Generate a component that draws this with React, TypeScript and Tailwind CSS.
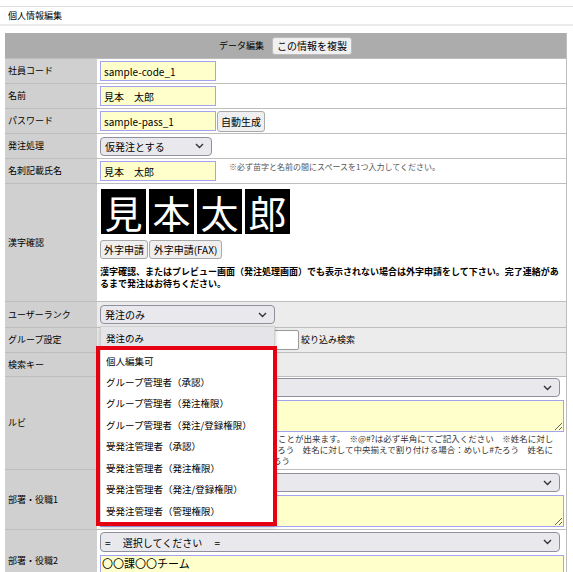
import React from "react";

const Chevron = () => (
  <svg width="9" height="6" viewBox="0 0 9 6" className="shrink-0">
    <path d="M1 1l3.5 3.5L8 1" fill="none" stroke="#333" strokeWidth="1.4" />
  </svg>
);

function FakeSelect({ value, className }: { value: string; className: string }) {
  return (
    <div
      className={`flex items-center justify-between rounded-[4px] border border-[#8f8f9d] bg-[#e9e9ed] pl-[4px] pr-[7px] text-[10px] ${className}`}
    >
      <span className="whitespace-pre">{value}</span>
      <Chevron />
    </div>
  );
}

function Row({
  label,
  h,
  gray,
  valueClass,
  children,
}: {
  label: string;
  h: string;
  gray?: boolean;
  valueClass?: string;
  children?: React.ReactNode;
}) {
  return (
    <div className={`grid grid-cols-[92px_1fr] border-t border-[#bdbdbd] ${h}`}>
      <div className="flex items-center bg-[#d0d0d0] pl-[3px] text-[9px]">{label}</div>
      <div className={`pl-[3px] ${gray ? "bg-[#ececec]" : "bg-white"} ${valueClass ?? "flex items-center"}`}>
        {children}
      </div>
    </div>
  );
}

const inputCls =
  "h-[20px] border border-[#a3a3f0] bg-[#ffffcc] px-[3px] text-[10px] leading-[18px] outline-none";
const btnCls =
  "h-[19px] rounded-[3px] border border-[#a9a9a9] bg-[#efefef] px-[3px] text-[10px] leading-[17px] whitespace-nowrap";

const rankOptions = [
  "個人編集可",
  "グループ管理者（承認）",
  "グループ管理者（発注権限）",
  "グループ管理者（発注/登録権限）",
  "受発注管理者（承認）",
  "受発注管理者（発注権限）",
  "受発注管理者（発注/登録権限）",
  "受発注管理者（管理権限）",
];

export default function App() {
  return (
    <div className="h-[572px] w-[573px] overflow-hidden bg-white font-['Noto_Sans_CJK_JP',sans-serif] text-[10px] text-black">
      <div className="mt-[6px] flex h-[20px] items-center border-t border-b-2 border-t-[#dedede] border-b-[#ebebeb] pl-[8px] text-[9px]">
        個人情報編集
      </div>

      <div className="ml-[5px] mt-[7px] w-[562px] border-r border-[#bdbdbd]">
        {/* header */}
        <div className="flex h-[25px] items-center justify-center bg-[#acacac] text-[9px]">
          <span>データ編集</span>
          <button className="ml-[8px] h-[18px] rounded-[3px] border border-[#bbb] bg-[#f0f0f0] px-[4px] text-[10px] leading-[16px]">
            この情報を複製
          </button>
        </div>

        <Row label="社員コード" h="h-[25px]">
          <input readOnly value="sample-code_1" className={`${inputCls} w-[116px]`} />
        </Row>
        <Row label="名前" h="h-[25px]">
          <input readOnly value="見本　太郎" className={`${inputCls} w-[116px]`} />
        </Row>
        <Row label="パスワード" h="h-[25px]">
          <input readOnly value="sample-pass_1" className={`${inputCls} w-[116px]`} />
          <button className={`${btnCls} ml-[1px] h-[21px]`}>自動生成</button>
        </Row>
        <Row label="発注処理" h="h-[25px]">
          <FakeSelect value="仮発注とする" className="h-[19px] w-[112px]" />
        </Row>
        <Row label="名刺記載氏名" h="h-[25px]">
          <input readOnly value="見本　太郎" className={`${inputCls} w-[116px]`} />
          <span className="ml-[13px] -mt-[8px] text-[8px] text-[#555]">
            ※必ず苗字と名前の間にスペースを1つ入力してください。
          </span>
        </Row>

        <Row label="漢字確認" h="h-[118px]" valueClass="pt-[5px]">
          <div className="flex gap-[3px] pl-[1px]">
            {["見", "本", "太", "郎"].map((c) => (
              <div
                key={c}
                className="flex h-[45px] w-[45px] items-center justify-center bg-black text-[38px] leading-none text-white"
              >
                {c}
              </div>
            ))}
          </div>
          <div className="mt-[6px] flex gap-[1px]">
            <button className={`${btnCls} w-[48px]`}>外字申請</button>
            <button className={`${btnCls} w-[73px]`}>外字申請(FAX)</button>
          </div>
          <p className="mt-[7px] w-[464px] text-[9px] font-bold leading-[12px]">
            漢字確認、またはプレビュー画面（発注処理画面）でも表示されない場合は外字申請をして下さい。完了連絡があるまで発注はお待ちください。
          </p>
        </Row>

        <Row label="ユーザーランク" h="h-[26px]" gray>
          <div className="relative">
            <FakeSelect value="発注のみ" className="h-[19px] w-[175px]" />
            <div className="absolute left-0 top-[21px] z-10 w-[175px] border border-[#d0d0d0] bg-white pb-[2px] text-[9.5px] shadow-[0_2px_4px_rgba(0,0,0,0.25)]">
              <div className="flex h-[23px] items-center bg-[#e4e4e9] pl-[5px]">発注のみ</div>
              {rankOptions.map((o) => (
                <div key={o} className="flex h-[21.45px] items-center pl-[5px]">
                  {o}
                </div>
              ))}
              <div className="pointer-events-none absolute -left-[5px] top-[19px] h-[180px] w-[181px] border-4 border-[#e50012]" />
            </div>
          </div>
        </Row>

        <Row label="グループ設定" h="h-[25px]" gray>
          <FakeSelect value="" className="h-[19px] w-[95px]" />
          <input readOnly value="" className="ml-[2px] h-[20px] w-[102px] rounded-[2px] border border-[#999] bg-white" />
          <span className="ml-[2px] text-[9px]">絞り込み検索</span>
        </Row>

        <Row label="検索キー" h="h-[24px]" gray />

        <Row label="ルビ" h="h-[93px]" valueClass="pt-[1px]">
          <FakeSelect value="" className="h-[19px] w-[460px]" />
          <textarea readOnly className="mt-[3px] block h-[32px] w-[464px] border border-[#a3a3f0] bg-[#ffffcc]" />
          <div className="mt-[1px] whitespace-nowrap text-[8.5px] leading-[11px] text-[#333]">
            <div>※ルビ欄では記号を使って割り付けを指定することが出来ます。　※@#?は必ず半角にてご記入ください　※姓名に対し</div>
            <div>て文字を左揃えで割り付ける場合：めいし@たろう　姓名に対して中央揃えで割り付ける場合：めいし#たろう　姓名に</div>
            <div>対して右揃えで割り付けする場合：めいし?たろう</div>
          </div>
        </Row>

        <Row label="部署・役職1" h="h-[60px]" valueClass="pt-[3px]">
          <FakeSelect value="" className="h-[19px] w-[460px]" />
          <textarea readOnly className="mt-[3px] block h-[32px] w-[464px] border border-[#a3a3f0] bg-[#ffffcc]" />
        </Row>

        <Row label="部署・役職2" h="h-[62px]" valueClass="pt-[2px]">
          <FakeSelect value="=　 選択してください　 =" className="h-[20px] w-[460px]" />
          <textarea
            readOnly
            value="〇〇課〇〇チーム"
            className="mt-[3px] block h-[32px] w-[464px] border border-[#a3a3f0] bg-[#ffffcc] px-[1px] text-[11px] leading-[14px]"
          />
        </Row>
      </div>
    </div>
  );
}
